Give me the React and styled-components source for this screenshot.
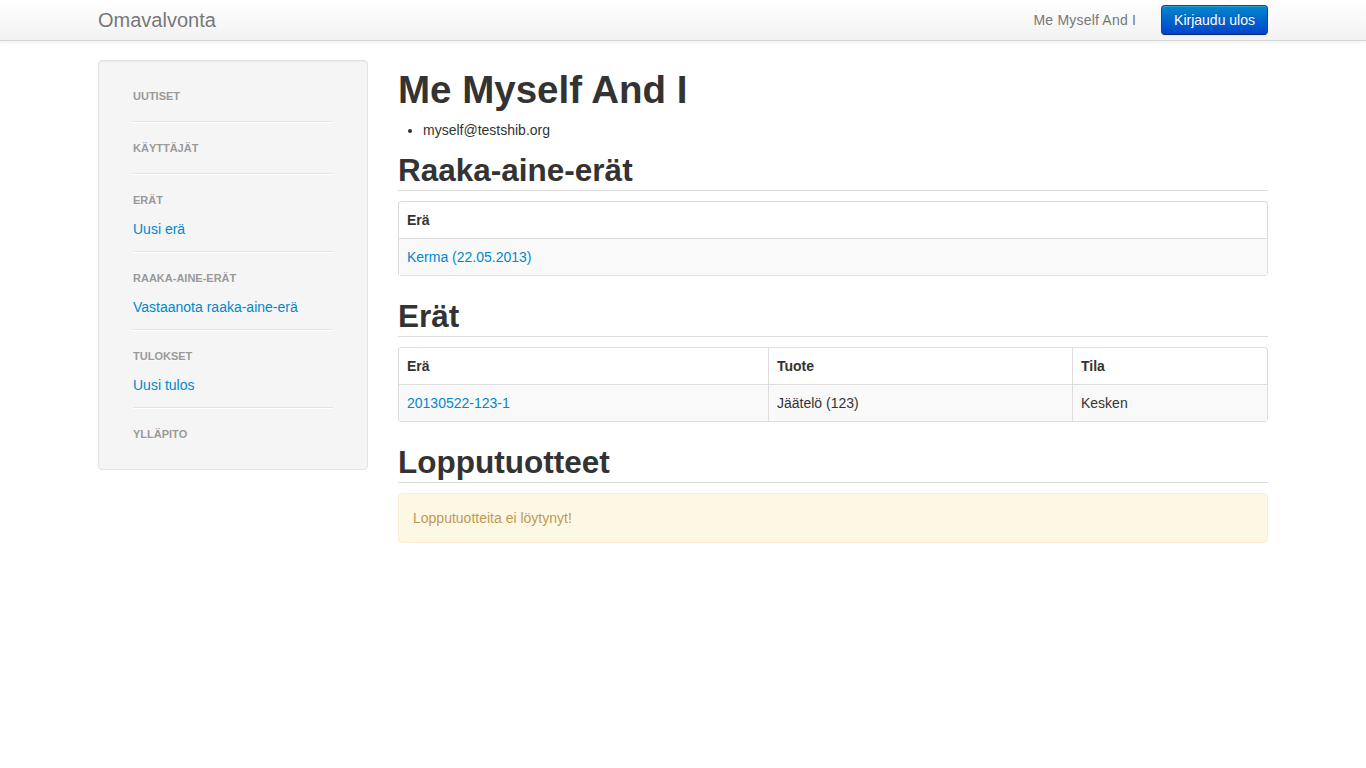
import React from 'react';
import styled, { createGlobalStyle } from 'styled-components';

const GlobalStyle = createGlobalStyle`
  body {
    margin: 0;
    font-family: "Liberation Sans", Arial, sans-serif;
    font-size: 14px;
    line-height: 20px;
    color: #333333;
    background: #ffffff;
  }
  a {
    color: #0088cc;
    text-decoration: none;
  }
`;

const Navbar = styled.div`
  height: 40px;
  background-image: linear-gradient(to bottom, #ffffff, #f2f2f2);
  border-bottom: 1px solid #d4d4d4;
  box-shadow: 0 1px 4px rgba(0, 0, 0, 0.065);
`;

const Container = styled.div`
  width: 1170px;
  margin: 0 auto;
`;

const NavInner = styled(Container)`
  display: flex;
  align-items: center;
  height: 40px;
`;

const Brand = styled.a`
  font-size: 20px;
  line-height: 20px;
  color: #777777;
  text-shadow: 0 1px 0 #ffffff;
  margin-right: auto;
`;

const NavText = styled.span`
  color: #777777;
  margin-right: 25px;
  letter-spacing: 0.2px;
`;

const Button = styled.button`
  font-family: inherit;
  font-size: 14px;
  line-height: 20px;
  padding: 4px 12px;
  color: #ffffff;
  text-shadow: 0 -1px 0 rgba(0, 0, 0, 0.25);
  background-image: linear-gradient(to bottom, #0088cc, #0044cc);
  border: 1px solid #0044cc;
  border-bottom-color: #002a80;
  border-radius: 4px;
  box-shadow: inset 0 1px 0 rgba(255, 255, 255, 0.2), 0 1px 2px rgba(0, 0, 0, 0.05);
  cursor: pointer;
`;

const Layout = styled(Container)`
  display: grid;
  grid-template-columns: 270px 870px;
  gap: 30px;
  padding-top: 19px;
  align-items: start;
`;

const Well = styled.div`
  display: flex;
  flex-direction: column;
  background: #f5f5f5;
  border: 1px solid #e3e3e3;
  border-radius: 4px;
  box-shadow: inset 0 1px 1px rgba(0, 0, 0, 0.05);
  padding: 19px 34px;
`;

const NavHeader = styled.div`
  font-size: 11px;
  line-height: 20px;
  padding: 3px 0;
  margin: 3px 0;
  font-weight: bold;
  text-transform: uppercase;
  color: #999999;
  text-shadow: 0 1px 0 rgba(255, 255, 255, 0.5);
`;

const NavLink = styled.a`
  display: block;
  line-height: 20px;
  padding: 3px 0;
`;

const Divider = styled.div`
  height: 1px;
  margin: 9px 0;
  background: #e5e5e5;
  border-bottom: 1px solid #ffffff;
`;

const Main = styled.div``;

const Title = styled.h1`
  font-size: 38.5px;
  line-height: 40px;
  margin: 10px 0;
  font-weight: bold;
`;

const List = styled.ul`
  margin: 0 0 10px 25px;
  padding: 0;
`;

const Heading = styled.h2`
  font-size: 31.5px;
  line-height: 40px;
  margin: 0 0 10px;
  font-weight: bold;
  border-bottom: 1px solid #dddddd;
`;

const Table = styled.table`
  width: 100%;
  border-collapse: separate;
  border-spacing: 0;
  border: 1px solid #dddddd;
  border-left: 0;
  border-radius: 4px;
  margin-bottom: 20px;
  table-layout: fixed;
`;

const Th = styled.th`
  text-align: left;
  font-weight: bold;
  padding: 8px;
  line-height: 20px;
  border-left: 1px solid #dddddd;
  width: ${p => p.$w || 'auto'};
`;

const Td = styled.td`
  padding: 8px;
  line-height: 20px;
  border-left: 1px solid #dddddd;
  border-top: 1px solid #dddddd;
  background: #f9f9f9;
`;

const Alert = styled.div`
  padding: 14px 14px;
  background: #fcf8e3;
  border: 1px solid #fbeed5;
  border-radius: 4px;
  color: #c09853;
  text-shadow: 0 1px 0 rgba(255, 255, 255, 0.5);
`;

const sidebar = [
  { title: 'Uutiset' },
  { title: 'Käyttäjät' },
  { title: 'Erät', link: 'Uusi erä' },
  { title: 'Raaka-aine-erät', link: 'Vastaanota raaka-aine-erä' },
  { title: 'Tulokset', link: 'Uusi tulos' },
  { title: 'Ylläpito' },
];

const App = () => {
  return (
    <>
      <GlobalStyle />
      <Navbar>
        <NavInner>
          <Brand href="#">Omavalvonta</Brand>
          <NavText>Me Myself And I</NavText>
          <Button>Kirjaudu ulos</Button>
        </NavInner>
      </Navbar>
      <Layout>
        <Well>
          {sidebar.map((s, i) => (
            <React.Fragment key={s.title}>
              {i > 0 && <Divider />}
              <NavHeader>{s.title}</NavHeader>
              {s.link && <NavLink href="#">{s.link}</NavLink>}
            </React.Fragment>
          ))}
        </Well>
        <Main>
          <Title>Me Myself And I</Title>
          <List>
            <li>myself@testshib.org</li>
          </List>

          <Heading>Raaka-aine-erät</Heading>
          <Table>
            <thead>
              <tr><Th>Erä</Th></tr>
            </thead>
            <tbody>
              <tr><Td><a href="#">Kerma (22.05.2013)</a></Td></tr>
            </tbody>
          </Table>

          <Heading>Erät</Heading>
          <Table>
            <thead>
              <tr>
                <Th $w="353px">Erä</Th>
                <Th $w="287px">Tuote</Th>
                <Th>Tila</Th>
              </tr>
            </thead>
            <tbody>
              <tr>
                <Td><a href="#">20130522-123-1</a></Td>
                <Td>Jäätelö (123)</Td>
                <Td>Kesken</Td>
              </tr>
            </tbody>
          </Table>

          <Heading>Lopputuotteet</Heading>
          <Alert>Lopputuotteita ei löytynyt!</Alert>
        </Main>
      </Layout>
    </>
  );
};

export default App;
